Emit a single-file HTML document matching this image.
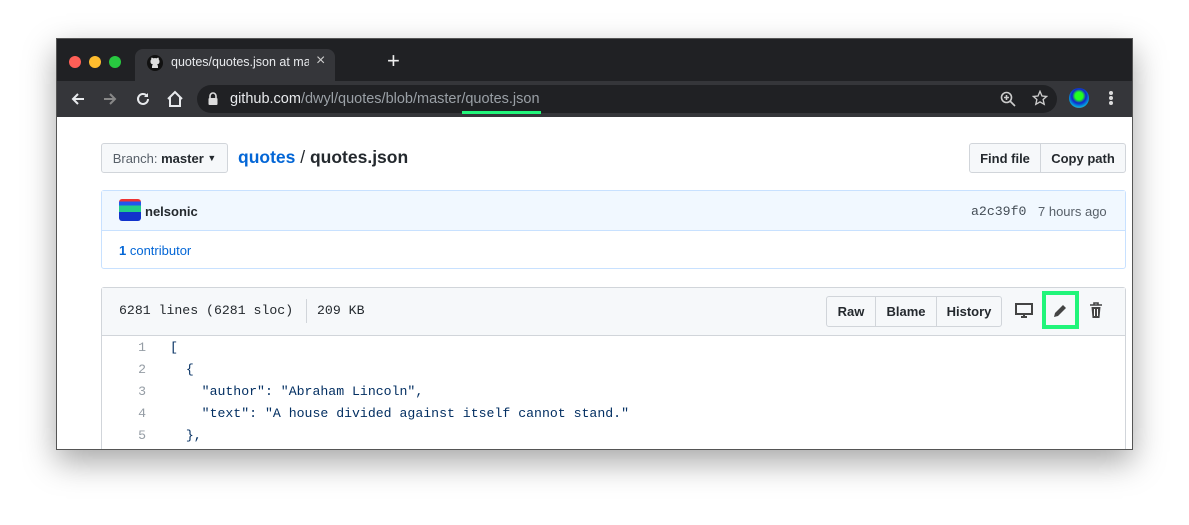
<!DOCTYPE html>
<html><head><meta charset="utf-8"><style>
*{margin:0;padding:0;box-sizing:border-box}
body{width:1189px;height:525px;background:#fff;position:relative;overflow:hidden;font-family:"Liberation Sans",sans-serif}
.a{position:absolute}
.win{left:56px;top:38px;width:1077px;height:412px;background:#fff;border:1px solid #555;box-shadow:0 12px 30px rgba(0,0,0,.35);overflow:hidden}
.mono{font-family:"Liberation Mono",monospace}
.btn{position:absolute;background:#f6f8fa;border:1px solid #d1d5da;font-size:13px;font-weight:bold;color:#24292e;display:flex;align-items:center;justify-content:center}
</style></head><body>
<div class="a win">
  <div class="a" style="left:0;top:0;width:1077px;height:42px;background:#202124"></div>
  <div class="a" style="left:12px;top:17px;width:12px;height:12px;border-radius:50%;background:#ff5f57"></div>
  <div class="a" style="left:32px;top:17px;width:12px;height:12px;border-radius:50%;background:#febc2e"></div>
  <div class="a" style="left:52px;top:17px;width:12px;height:12px;border-radius:50%;background:#28c840"></div>
  <div class="a" style="left:78px;top:10px;width:200px;height:35px;background:#35363a;border-radius:8px 8px 0 0"></div>
  <svg class="a" style="left:90px;top:16px" width="16" height="16" viewBox="0 0 16 16"><circle cx="8" cy="8" r="8" fill="#111"/><path d="M5 13c0-2 0-3 1-3.5C4 9 3.5 8 3.5 6.5c0-1 .3-1.6.8-2.1-.1-.5-.1-1.2.2-1.8 1 0 1.6.5 2 .8.9-.3 2.1-.3 3 0 .4-.3 1-.8 2-.8.3.6.3 1.3.2 1.8.5.5.8 1.1.8 2.1 0 1.5-.5 2.5-2.5 3 1 .5 1 1.5 1 3.5" fill="#ddd"/></svg>
  <div class="a" style="left:114px;top:16px;font-size:12.5px;color:#e8eaed;white-space:nowrap;width:138px;overflow:hidden">quotes/quotes.json at master · <span style="color:#666">d</span></div>
  <div class="a" style="left:259px;top:13px;font-size:16px;color:#ccc">×</div>
  <div class="a" style="left:330px;top:9px;font-size:22px;color:#eee">+</div>
  <div class="a" style="left:0;top:42px;width:1077px;height:36px;background:#35363a"></div>
  <svg class="a" style="left:12px;top:51px" width="18" height="18" viewBox="0 0 18 18"><path d="M15 9H4M9 4L4 9l5 5" stroke="#e8eaed" stroke-width="2" fill="none"/></svg>
  <svg class="a" style="left:44px;top:51px" width="18" height="18" viewBox="0 0 18 18"><path d="M3 9h11M9 4l5 5-5 5" stroke="#888" stroke-width="2" fill="none"/></svg>
  <svg class="a" style="left:77px;top:51px" width="18" height="18" viewBox="0 0 18 18"><path d="M14 9a5 5 0 1 1-1.5-3.6" stroke="#e8eaed" stroke-width="2" fill="none"/><path d="M14 3v4h-4z" fill="#e8eaed"/></svg>
  <svg class="a" style="left:108px;top:50px" width="20" height="20" viewBox="0 0 20 20"><path d="M3 10L10 3l7 7M5 8v9h10V8" stroke="#e8eaed" stroke-width="2" fill="none"/></svg>
  <div class="a" style="left:140px;top:46px;width:860px;height:28px;background:#202124;border-radius:14px"></div>
  <svg class="a" style="left:150px;top:53px" width="12" height="14" viewBox="0 0 12 14"><path d="M3 6V4a3 3 0 0 1 6 0v2" stroke="#ddd" stroke-width="1.6" fill="none"/><rect x="1.5" y="6" width="9" height="7" rx="1" fill="#ddd"/></svg>
  <div class="a" style="left:173px;top:52px;font-size:14.5px;color:#e8eaed;white-space:nowrap">github.com<span style="color:#9aa0a6">/dwyl/quotes/blob/master/quotes.json</span></div>
  <div class="a" style="left:405px;top:72px;width:79px;height:3px;background:#21f57a"></div>
  <svg class="a" style="left:943px;top:52px" width="16" height="16" viewBox="0 0 16 16"><circle cx="6.5" cy="6.5" r="5" stroke="#ccc" stroke-width="1.6" fill="none"/><path d="M10 10l5 5M4 6.5h5M6.5 4v5" stroke="#ccc" stroke-width="1.6"/></svg>
  <svg class="a" style="left:975px;top:51px" width="16" height="16" viewBox="0 0 24 24"><path d="M12 2l3 7 7 .6-5.3 4.7 1.6 7.2L12 17.8 5.7 21.5l1.6-7.2L2 9.6 9 9z" stroke="#ccc" stroke-width="2" fill="none"/></svg>
  <div class="a" style="left:1012px;top:49px;width:20px;height:20px;border-radius:50%;background:radial-gradient(circle at 50% 40%,#2f2 0 25%,#12c 45%,#0ad 70%,#f33 90%)"></div>
  <div class="a" style="left:1052px;top:52px;width:4px;height:4px;background:#ddd;border-radius:50%;box-shadow:0 5px 0 #ddd,0 10px 0 #ddd"></div>
  <div class="btn" style="left:44px;top:104px;width:127px;height:30px;border-radius:3px;font-weight:normal;color:#586069">Branch:&nbsp;<b style="color:#24292e">master</b>&nbsp;<span style="font-size:9px;color:#24292e">▼</span></div>
  <div class="a" style="left:181px;top:108px;font-size:17.5px;color:#24292e"><b style="color:#0366d6">quotes</b> / <b>quotes.json</b></div>
  <div class="btn" style="left:912px;top:104px;width:72px;height:30px;border-radius:3px 0 0 3px">Find file</div>
  <div class="btn" style="left:983px;top:104px;width:86px;height:30px;border-radius:0 3px 3px 0">Copy path</div>
  <div class="a" style="left:44px;top:151px;width:1025px;height:79px;border:1px solid #c8e1ff;border-radius:3px"></div>
  <div class="a" style="left:45px;top:152px;width:1023px;height:40px;background:#f1f8ff;border-bottom:1px solid #c8e1ff"></div>
  <div class="a" style="left:62px;top:160px;width:22px;height:22px;border-radius:3px;background:linear-gradient(#e33 0 12%,#25e 12% 30%,#2c8 30% 60%,#13c 60%)"></div>
  <div class="a" style="left:88px;top:165px;font-size:13px;font-weight:bold;color:#24292e">nelsonic</div>
  <div class="a mono" style="left:914px;top:165px;font-size:13.2px;color:#444d56">a2c39f0</div>
  <div class="a" style="left:981px;top:165px;font-size:13px;color:#586069">7 hours ago</div>
  <div class="a" style="left:62px;top:204px;font-size:13px;color:#0366d6"><b>1</b> contributor</div>
  <div class="a" style="left:44px;top:248px;width:1025px;height:180px;border:1px solid #d1d5da;border-radius:3px"></div>
  <div class="a" style="left:45px;top:249px;width:1023px;height:48px;background:#f6f8fa;border-bottom:1px solid #d1d5da"></div>
  <div class="a mono" style="left:62px;top:264px;font-size:13.2px;color:#24292e">6281 lines (6281 sloc)</div>
  <div class="a" style="left:249px;top:260px;width:1px;height:24px;background:#d1d5da"></div>
  <div class="a mono" style="left:260px;top:264px;font-size:13.2px;color:#24292e">209 KB</div>
  <div class="btn" style="left:769px;top:257px;width:50px;height:31px;border-radius:3px 0 0 3px">Raw</div>
  <div class="btn" style="left:818px;top:257px;width:62px;height:31px">Blame</div>
  <div class="btn" style="left:879px;top:257px;width:66px;height:31px;border-radius:0 3px 3px 0">History</div>
  <svg class="a" style="left:958px;top:264px" width="18" height="16" viewBox="0 0 18 16"><rect x="1" y="1" width="16" height="10" fill="none" stroke="#444" stroke-width="2"/><path d="M6 14h6M9 11v3" stroke="#444" stroke-width="2"/></svg>
  <div class="a" style="left:985px;top:252px;width:37px;height:38px;border:4px solid #21f57a"></div>
  <svg class="a" style="left:996px;top:264px" width="15" height="15" viewBox="0 0 15 15"><path d="M1 14l1-4 8-8 3 3-8 8z" fill="#444"/></svg>
  <svg class="a" style="left:1032px;top:263px" width="14" height="17" viewBox="0 0 14 17"><path d="M1 3h12M5 3V1h4v2" stroke="#444" stroke-width="1.6" fill="none"/><path d="M2.5 5h9l-1 11h-7z" fill="#444"/><path d="M5.5 7v7M8.5 7v7" stroke="#fff"/></svg>
  <div class="a mono" style="left:45px;top:298px;width:44px;text-align:right;font-size:13.2px;line-height:22px;color:#959da5">1<br>2<br>3<br>4<br>5<br>6</div>
  <pre class="a mono" style="left:113px;top:298px;font-size:13.2px;line-height:22px;color:#032f62">[
  {
    "author": "Abraham Lincoln",
    "text": "A house divided against itself cannot stand."
  },
  {</pre>
</div>
</body></html>
